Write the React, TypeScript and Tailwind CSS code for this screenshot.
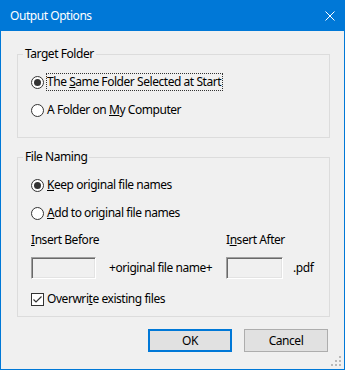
import type { ReactNode } from 'react'

function Radio({ checked = false }: { checked?: boolean }) {
  return (
    <span className="flex h-[13px] w-[13px] shrink-0 items-center justify-center rounded-full border border-[#333333] bg-white">
      {checked && <span className="h-[7px] w-[7px] rounded-full bg-[#333333]" />}
    </span>
  )
}

function RadioRow({ checked, focused, children }: { checked?: boolean; focused?: boolean; children: ReactNode }) {
  return (
    <div className="flex h-[18px] items-center">
      <Radio checked={checked} />
      <span
        className={
          focused
            ? 'ml-[2px] inline-block h-[18px] border border-dotted border-[#333333] pr-[1px] leading-[16px]'
            : 'ml-[2px] inline-block h-[18px] border border-transparent pr-[1px] leading-[16px]'
        }
      >
        {children}
      </span>
    </div>
  )
}

function TextBox({ width }: { width: string }) {
  return (
    <div
      className={`h-[22px] border border-t-[#a0a0a0] border-l-[#a0a0a0] border-b-white border-r-white bg-[#f0f0f0] shadow-[inset_1px_1px_0_#696969,inset_-1px_-1px_0_#e3e3e3] ${width}`}
    />
  )
}

export default function App() {
  return (
    <div className="relative flex h-[370px] w-[345px] flex-col border border-t-0 border-[#0078d7] bg-[#f0f0f0] font-['Noto_Sans',sans-serif] text-[12px] tracking-[-0.45px] text-black">
      {/* title bar */}
      <div className="flex h-[31px] shrink-0 items-center justify-between bg-[#0078d7] pl-[9px] pr-[9px] text-white">
        <span>Output Options</span>
        <svg width="10" height="10" viewBox="0 0 10 10">
          <path d="M0.5 0.5 L9.5 9.5 M9.5 0.5 L0.5 9.5" stroke="white" strokeWidth="1" />
        </svg>
      </div>

      <div className="flex flex-col pl-[16px] pr-[14px] pt-[15px]">
        <fieldset className="h-[92px] border border-[#dcdcdc] pl-[5px] pt-[11px]">
          <legend className="px-[2px] leading-[16px]">Target Folder</legend>
          <div className="ml-[8px] flex flex-col gap-[10px]">
            <RadioRow checked focused>
              The <span className="underline">S</span>ame Folder Selected at Start
            </RadioRow>
            <RadioRow>
              A Folder on <span className="underline">M</span>y Computer
            </RadioRow>
          </div>
        </fieldset>

        <fieldset className="mt-[11px] h-[168px] border border-[#dcdcdc] pl-[5px] pt-[11px]">
          <legend className="px-[2px] leading-[16px]">File Naming</legend>
          <div className="ml-[8px] flex flex-col">
            <RadioRow checked>
              <span className="underline">K</span>eep original file names
            </RadioRow>
            <div className="mt-[10px]">
              <RadioRow>
                <span className="underline">A</span>dd to original file names
              </RadioRow>
            </div>
            <div className="mt-[9px] flex h-[18px] items-center">
              <span className="w-[195px]">
                <span className="underline">I</span>nsert Before
              </span>
              <span>
                I<span className="underline">n</span>sert After
              </span>
            </div>
            <div className="mt-[8px] flex h-[22px] items-center">
              <TextBox width="w-[65px]" />
              <span className="ml-[13px] w-[117px]">+original file name+</span>
              <TextBox width="w-[57px]" />
              <span className="ml-[10px]">.pdf</span>
            </div>
            <div className="mt-[11px] flex h-[18px] items-center">
              <span className="flex h-[13px] w-[13px] items-center justify-center border border-[#333333] bg-white">
                <svg width="11" height="11" viewBox="0 0 11 11">
                  <path d="M1.5 5.5 L4 8 L9.5 2.5" stroke="#333333" strokeWidth="1.2" fill="none" />
                </svg>
              </span>
              <span className="ml-[3px]">
                Overwri<span className="underline">t</span>e existing files
              </span>
            </div>
          </div>
        </fieldset>

        <div className="mt-[12px] flex justify-end gap-[12px] pr-[2px]">
          <button className="flex h-[23px] w-[84px] items-center justify-center border-2 border-[#0078d7] bg-[#e1e1e1]">
            OK
          </button>
          <button className="flex h-[23px] w-[84px] items-center justify-center border border-[#adadad] bg-[#e1e1e1]">
            Cancel
          </button>
        </div>
      </div>

      {/* size grip */}
      <svg className="absolute bottom-[2px] right-[2px]" width="11" height="11" viewBox="0 0 11 11">
        <g fill="#b9b9b9">
          <rect x="8" y="0" width="2" height="2" />
          <rect x="4" y="4" width="2" height="2" />
          <rect x="8" y="4" width="2" height="2" />
          <rect x="0" y="8" width="2" height="2" />
          <rect x="4" y="8" width="2" height="2" />
          <rect x="8" y="8" width="2" height="2" />
        </g>
      </svg>
    </div>
  )
}
